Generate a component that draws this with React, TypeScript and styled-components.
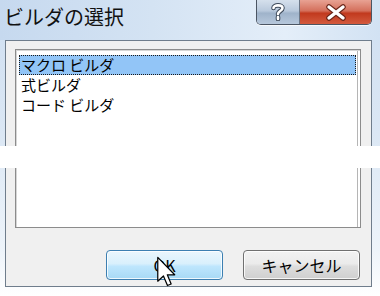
import React from 'react';
import styled, { createGlobalStyle } from 'styled-components';

const GlobalStyle = createGlobalStyle`
  html, body {
    margin: 0;
    padding: 0;
    background: #ffffff;
  }
`;

const Window = styled.div`
  position: relative;
  width: 380px;
  height: 296px;
  display: flex;
  flex-direction: column;
  overflow: hidden;
  background: linear-gradient(180deg, #cfdff1 0%, #dbe7f4 45%, #eef4fa 85%, #ffffff 100%);
  font-family: "Noto Sans CJK JP", "Noto Sans", sans-serif;
`;

const TitleBar = styled.div`
  height: 40px;
  display: flex;
  align-items: flex-start;
  background: linear-gradient(90deg, #c6d9ef 0%, #d4e3f3 40%, #e4eef9 75%, #d2e2f3 100%);
`;

const Title = styled.div`
  flex: 1;
  padding: 3px 0 0 4px;
  font-size: 20px;
  line-height: 28px;
  color: #111;
`;

const CaptionButtons = styled.div`
  display: flex;
  margin-right: 8px;
  border: 1px solid #4b5563;
  border-top: none;
  border-radius: 0 0 5px 5px;
  overflow: hidden;
  box-shadow: 0 1px 0 rgba(255, 255, 255, 0.7);
`;

const CaptionButton = styled.div<{ $w: number; $close?: boolean }>`
  width: ${({ $w }) => $w}px;
  height: 24px;
  display: flex;
  align-items: center;
  justify-content: center;
  background: ${({ $close }) =>
    $close
      ? 'linear-gradient(180deg, #e8a293 0%, #d4705c 45%, #c1391e 55%, #d35a3e 100%)'
      : 'linear-gradient(180deg, #d5e0ec 0%, #b9c9dc 45%, #9fb3ca 55%, #b7c8dc 100%)'};
  border-left: ${({ $close }) => ($close ? '1px solid #6b7686' : 'none')};
`;

const Client = styled.div`
  flex: 1;
  margin: 0 8px 9px 5px;
  border: 1px solid #6f7d8c;
  background: #f0f0f0;
  display: flex;
  flex-direction: column;
  padding: 8px 10px 0 9px;
`;

const ListBox = styled.div`
  height: 172px;
  background: #ffffff;
  border: 1px solid #8c8c8c;
  box-shadow: inset 1px 1px 0 #d6d6d6, inset -2px 0 0 #ffffff, inset -3px 0 0 #b5b5b5;
  padding: 5px 4px 0 3px;
  display: flex;
  flex-direction: column;
`;

const Item = styled.div<{ $selected?: boolean }>`
  height: 20px;
  line-height: 20px;
  font-size: 15px;
  padding-left: 2px;
  color: #000;
  background: ${({ $selected }) => ($selected ? '#92c5f7' : 'transparent')};
  outline: ${({ $selected }) => ($selected ? '1px dotted #1a1a1a' : 'none')};
  outline-offset: -1px;
  white-space: pre;
`;

const ButtonRow = styled.div`
  display: flex;
  justify-content: flex-end;
  gap: 20px;
  padding: 22px 1px 0 0;
`;

const Button = styled.div<{ $default?: boolean }>`
  width: 115px;
  height: 28px;
  display: flex;
  align-items: center;
  justify-content: center;
  font-size: 16px;
  color: #000;
  border-radius: 4px;
  border: 1px solid ${({ $default }) => ($default ? '#3c7fb1' : '#707070')};
  box-shadow: inset 0 0 0 1px rgba(255, 255, 255, 0.8);
  background: ${({ $default }) =>
    $default
      ? 'linear-gradient(180deg, #eaf6fd 0%, #d9f0fc 45%, #bee6fd 55%, #a7d9f5 100%)'
      : 'linear-gradient(180deg, #f2f2f2 0%, #ebebeb 45%, #dddddd 55%, #cfcfcf 100%)'};
`;

const Glitch = styled.div`
  position: absolute;
  left: 0;
  right: 0;
  top: 146px;
  height: 22px;
  background: #ffffff;
`;

const Cursor = styled.svg`
  position: absolute;
  left: 157px;
  top: 256px;
`;

const HelpGlyph = () => (
  <svg width="14" height="18" viewBox="0 0 14 18">
    <path
      d="M2.5 5 C2.5 1.5 11.5 1.5 11.5 5 C11.5 8 7 8 7 11 M7 14 L7 16"
      fill="none"
      stroke="#3e4a5a"
      strokeWidth="4.6"
      strokeLinecap="round"
    />
    <path
      d="M2.5 5 C2.5 1.5 11.5 1.5 11.5 5 C11.5 8 7 8 7 11 M7 14 L7 16"
      fill="none"
      stroke="#ffffff"
      strokeWidth="2.6"
      strokeLinecap="round"
    />
  </svg>
);

const CloseGlyph = () => (
  <svg width="22" height="17" viewBox="0 0 22 17">
    <path d="M4 3 L18 14 M18 3 L4 14" stroke="#6a2418" strokeWidth="5.5" strokeLinecap="round" />
    <path d="M4 3 L18 14 M18 3 L4 14" stroke="#ffffff" strokeWidth="3.4" strokeLinecap="round" />
  </svg>
);

export default function App() {
  return (
    <>
      <GlobalStyle />
      <Window>
        <TitleBar>
          <Title>ビルダの選択</Title>
          <CaptionButtons>
            <CaptionButton $w={42}>
              <HelpGlyph />
            </CaptionButton>
            <CaptionButton $w={71} $close>
              <CloseGlyph />
            </CaptionButton>
          </CaptionButtons>
        </TitleBar>
        <Client>
          <ListBox>
            <Item $selected>マクロ ビルダ</Item>
            <Item>式ビルダ</Item>
            <Item>コード ビルダ</Item>
          </ListBox>
          <ButtonRow>
            <Button $default>OK</Button>
            <Button>キャンセル</Button>
          </ButtonRow>
        </Client>
        <Glitch />
        <Cursor width="20" height="32" viewBox="0 0 13 20">
          <path
            d="M0.5 0.5 L0.5 16 L4.2 12.6 L6.8 18.8 L9.2 17.8 L6.7 11.8 L11.5 11.8 Z"
            fill="#ffffff"
            stroke="#000000"
            strokeWidth="0.8"
            strokeLinejoin="round"
          />
        </Cursor>
      </Window>
    </>
  );
}
